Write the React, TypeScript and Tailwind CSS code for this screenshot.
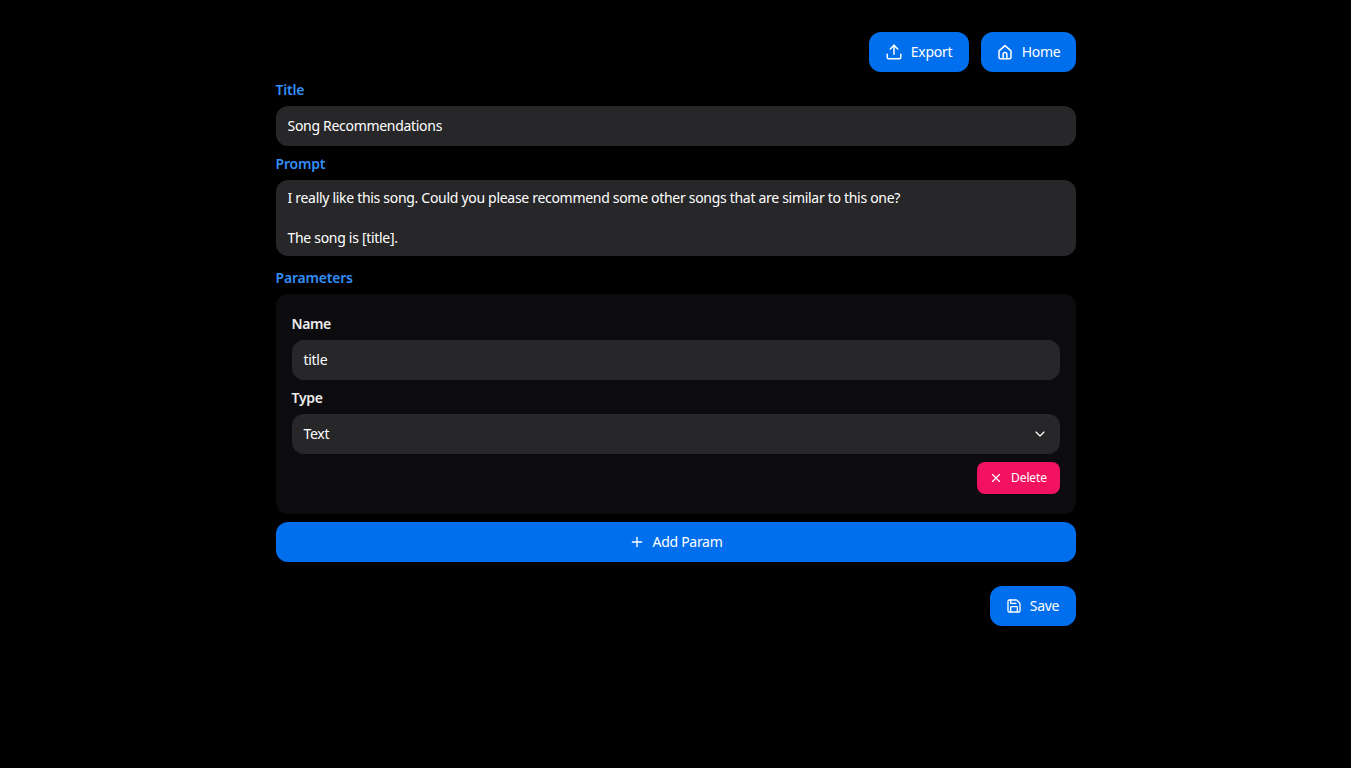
import { ChevronDown, Plus, Save, Upload, X } from "lucide-react";
import type { ReactNode } from "react";

const font = { fontFamily: '"Noto Sans", sans-serif' };

function HomeIcon() {
  return (
    <svg width="18" height="18" viewBox="0 0 24 24" fill="none" stroke="currentColor" strokeWidth="2" strokeLinecap="round" strokeLinejoin="round">
      <path d="M4 10.5 12 3.5l8 7V19a2 2 0 0 1-2 2H6a2 2 0 0 1-2-2z" />
      <path d="M9.5 21v-6a2.5 2.5 0 0 1 5 0v6" />
    </svg>
  );
}

function Btn({ icon, children, className = "" }: { icon: ReactNode; children: ReactNode; className?: string }) {
  return (
    <button className={`flex h-10 items-center justify-center gap-2 rounded-xl bg-[#006fee] text-sm tracking-[-0.3px] text-white ${className}`}>
      {icon}
      <span>{children}</span>
    </button>
  );
}

function Label({ children, className = "" }: { children: ReactNode; className?: string }) {
  return <div className={`h-5 text-sm leading-5 font-semibold tracking-[-0.2px] text-[#338ef7] ${className}`}>{children}</div>;
}

function Field({ children, className = "" }: { children: ReactNode; className?: string }) {
  return <div className={`flex h-10 items-center rounded-xl bg-[#27272a] px-3 text-sm tracking-[-0.3px] text-white ${className}`}>{children}</div>;
}

export default function App() {
  return (
    <div className="min-h-[768px] bg-black pt-8" style={font}>
      <div className="mx-auto w-[800px]">
        <div className="flex justify-end gap-3">
          <Btn className="w-[100px]" icon={<Upload size={18} />}>Export</Btn>
          <Btn className="w-[95px]" icon={<HomeIcon />}>Home</Btn>
        </div>

        <Label className="mt-2">Title</Label>
        <Field className="mt-1.5">Song Recommendations</Field>

        <Label className="mt-2">Prompt</Label>
        <div className="mt-1.5 h-[76px] rounded-xl bg-[#27272a] px-3 py-2 text-sm leading-5 tracking-[-0.3px] text-white">
          <div>I really like this song. Could you please recommend some other songs that are similar to this one?</div>
          <div className="h-5" />
          <div>The song is [title].</div>
        </div>

        <Label className="mt-3">Parameters</Label>
        <div className="mt-1.5 h-[220px] rounded-xl bg-[#0c0c0e] px-4 pt-5">
          <div className="h-5 text-sm leading-5 font-semibold tracking-[-0.4px] text-[#ececee]">Name</div>
          <Field className="mt-1.5">title</Field>
          <div className="mt-2 h-5 text-sm leading-5 font-semibold tracking-[-0.3px] text-[#ececee]">Type</div>
          <Field className="mt-1.5 justify-between">
            <span>Text</span>
            <ChevronDown size={16} strokeWidth={1.75} />
          </Field>
          <div className="mt-2 flex justify-end">
            <button className="flex h-8 w-[83px] items-center justify-center gap-2 rounded-lg bg-[#f31260] text-xs tracking-[-0.1px] text-white">
              <X size={14} />
              <span>Delete</span>
            </button>
          </div>
        </div>

        <Btn className="mt-2 w-full" icon={<Plus size={16} />}>Add Param</Btn>

        <div className="mt-6 flex justify-end">
          <Btn className="w-[86px]" icon={<Save size={16} />}>Save</Btn>
        </div>
      </div>
    </div>
  );
}
